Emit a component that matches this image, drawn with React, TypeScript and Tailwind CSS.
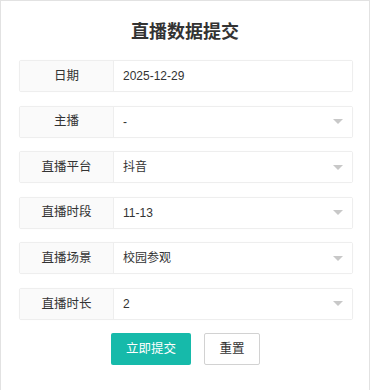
const FIELDS = [
  { label: "日期", value: "2025-12-29", select: false },
  { label: "主播", value: "-", select: true },
  { label: "直播平台", value: "抖音", select: true },
  { label: "直播时段", value: "11-13", select: true },
  { label: "直播场景", value: "校园参观", select: true },
  { label: "直播时长", value: "2", select: true },
];

const font = { fontFamily: '"Liberation Sans", "Noto Sans CJK SC", sans-serif' };

export default function App() {
  return (
    <div className="w-[370px] h-[400px] bg-white border border-[#e2e2e2] text-[#333]" style={font}>
      {/* Title */}
      <h2 className="h-[59px] pt-[19px] text-center text-[18px] leading-[24px] font-bold text-[#333]">
        直播数据提交
      </h2>

      {/* Form rows */}
      <div className="ml-[18px] w-[334px] flex flex-col gap-[13.6px]">
        {FIELDS.map((f) => (
          <div key={f.label} className="flex h-[32px] border border-[#eeeeee] rounded-[2px] shadow-[0_0_1px_rgba(0,0,0,0.04)]">
            <div className="w-[94px] shrink-0 bg-[#fafafa] border-r border-[#eeeeee] flex items-center justify-center text-[12.5px]">
              {f.label}
            </div>
            <div className="flex-1 flex items-center justify-between pl-[9px] pr-[9px] text-[12px] bg-white">
              <span>{f.value}</span>
              {f.select && (
                <span className="w-0 h-0 border-l-[5px] border-r-[5px] border-t-[5px] border-l-transparent border-r-transparent border-t-[#c8c8c8]" />
              )}
            </div>
          </div>
        ))}
      </div>

      {/* Buttons */}
      <div className="mt-[13px] flex justify-center gap-[13px] pl-[1px]">
        <button className="w-[80px] h-[32px] bg-[#16baaa] text-white text-[12.5px] rounded-[2px]">
          立即提交
        </button>
        <button className="w-[56px] h-[32px] bg-white border border-[#d2d2d2] text-[#333] text-[12.5px] rounded-[2px]">
          重置
        </button>
      </div>
    </div>
  );
}
